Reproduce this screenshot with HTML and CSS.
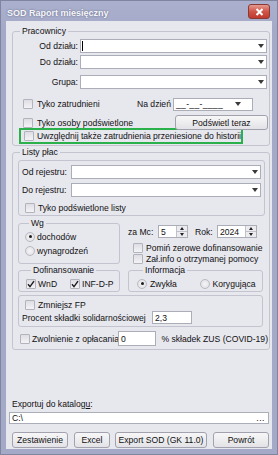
FILE: index.html
```html
<!DOCTYPE html>
<html lang="pl">
<head>
    <meta charset="UTF-8">
    <meta name="viewport" content="width=device-width, initial-scale=1.0">
    <title>SOD Raport miesięczny</title>
    <link rel="stylesheet" href="styles.css">
</head>
<body>

<div class="window">
    <div class="titlebar">
        <span class="title">SOD Raport miesięczny</span>
        <span class="close-btn">
            <svg width="9" height="8" viewBox="0 0 9 8"><path d="M1.5 1L7.5 7M7.5 1L1.5 7" stroke="#fff" stroke-width="2"/></svg>
        </span>
    </div>

    <div class="client">
        <!-- Pracownicy -->
        <fieldset class="group prac">
            <legend>Pracownicy</legend>
            <div class="row dzial-row">
                <span class="lbl-dzial">Od działu:</span>
                <div class="combo"><span class="cursor"></span><span class="arrow"></span></div>
            </div>
            <div class="row dzial-row mt2">
                <span class="lbl-dzial">Do działu:</span>
                <div class="combo"><span class="arrow"></span></div>
            </div>
            <div class="row dzial-row mt6">
                <span class="lbl-dzial">Grupa:</span>
                <div class="combo"><span class="arrow"></span></div>
            </div>
            <div class="row prac-chk1">
                <span class="chk-item zatr"><span class="check"></span>Tyko zatrudnieni</span>
                <span class="na-dzien">Na dzień</span>
                <div class="combo date"><span class="date-mask">__-__-____</span><span class="arrow"></span></div>
            </div>
            <div class="row prac-chk2">
                <span class="chk-item"><span class="check"></span>Tyko osoby podświetlone</span>
                <span class="btn podswietl">Podświetl teraz</span>
            </div>
            <div class="row highlight">
                <span class="chk-item"><span class="check"></span>Uwzględnij także zatrudnienia przeniesione do historii</span>
            </div>
        </fieldset>

        <!-- Listy płac -->
        <fieldset class="group listy">
            <legend>Listy płac</legend>
            <div class="box rejestr">
                <div class="row rej-row">
                    <span class="lbl-rej">Od rejestru:</span>
                    <div class="combo"><span class="arrow"></span></div>
                </div>
                <div class="row rej-row mt4">
                    <span class="lbl-rej">Do rejestru:</span>
                    <div class="combo"><span class="arrow"></span></div>
                </div>
                <div class="row rej-chk">
                    <span class="chk-item"><span class="check"></span>Tyko podświetlone listy</span>
                </div>
            </div>

            <div class="mid-row">
                <fieldset class="group wg">
                    <legend>Wg</legend>
                    <div class="row radio-row"><span class="radio on"></span>dochodów</div>
                    <div class="row radio-row mt3"><span class="radio"></span>wynagrodzeń</div>
                </fieldset>
                <div class="mid-right">
                    <div class="row spin-row">
                        <span class="lbl-mc">za Mc:</span>
                        <div class="spin mc">
                            <span class="spin-val">5</span>
                            <span class="spin-btns"><span class="up"></span><span class="down"></span></span>
                        </div>
                        <span class="lbl-rok">Rok:</span>
                        <div class="spin rok">
                            <span class="spin-val">2024</span>
                            <span class="spin-btns"><span class="up"></span><span class="down"></span></span>
                        </div>
                    </div>
                    <div class="row right-chk mt4"><span class="check"></span>Pomiń zerowe dofinansowanie</div>
                    <div class="row right-chk"><span class="check"></span>Zał.info o otrzymanej pomocy</div>
                </div>
            </div>

            <div class="dof-row">
                <fieldset class="group dof">
                    <legend>Dofinansowanie</legend>
                    <div class="row opt-row">
                        <span class="dof-item"><span class="check on"><svg width="8" height="8" viewBox="0 0 8 8"><path d="M1 4.2L3 6.6L7 1.2" fill="none" stroke="#1c1c1c" stroke-width="1.4"/></svg></span>WnD</span>
                        <span class="dof-item"><span class="check on"><svg width="8" height="8" viewBox="0 0 8 8"><path d="M1 4.2L3 6.6L7 1.2" fill="none" stroke="#1c1c1c" stroke-width="1.4"/></svg></span>INF-D-P</span>
                    </div>
                </fieldset>
                <fieldset class="group info">
                    <legend>Informacja</legend>
                    <div class="row opt-row">
                        <span class="info-item"><span class="radio on"></span>Zwykła</span>
                        <span class="info-item"><span class="radio"></span>Korygująca</span>
                    </div>
                </fieldset>
            </div>

            <div class="box fp">
                <div class="row fp-chk"><span class="check"></span>Zmniejsz FP</div>
                <div class="row fp-row">
                    <span class="lbl-proc">Procent składki solidarnościowej</span>
                    <span class="edit proc">2,3</span>
                </div>
            </div>

            <div class="row zwol-row">
                <span class="zwol-lbl"><span class="check"></span>Zwolnienie z opłacania</span>
                <span class="edit zwol">0</span>
                <span class="zus">% składek ZUS (COVID-19)</span>
            </div>
        </fieldset>

        <!-- Export -->
        <div class="export">
            <div class="export-lbl">Exportuj do katalog<u>u</u>:</div>
            <div class="edit path"><span>C:\</span><span class="dots">...</span></div>
            <div class="buttons">
                <span class="btn b-zest">Zestawienie</span>
                <span class="btn b-excel">Excel</span>
                <span class="btn b-sod">Export SOD (GK 11.0)</span>
                <span class="btn b-powrot">Powrót</span>
            </div>
        </div>
    </div>
</div>

</body>
</html>
```

FILE: styles.css
```css
* {
    box-sizing: border-box;
}
body {
    margin: 0;
    font-family: "Liberation Sans", Arial, sans-serif;
    font-size: 8.6px;
    color: #111;
    white-space: nowrap;
    background-color: #a5abc9;
}
.window {
    width: 278px;
    height: 455px;
    display: flex;
    flex-direction: column;
    background: linear-gradient(#aab0cd, #a3a9c7 30px, #a3a9c7);
    box-shadow: inset 0 0 0 1px #80859f;
}
.titlebar {
    height: 21px;
    display: flex;
    align-items: flex-start;
    justify-content: space-between;
    padding: 0 8px 0 7px;
}
.title {
    margin-top: 8px;
    line-height: 11px;
    font-size: 9px;
    font-weight: bold;
    color: #f6f6fa;
    text-shadow: 0 0 2px #5b607c;
}
.close-btn {
    margin-top: 4px;
    width: 22px;
    height: 15px;
    display: flex;
    align-items: center;
    justify-content: center;
    border: 1px solid #8a3a35;
    border-radius: 3px;
    background: linear-gradient(#e59a90, #cf5548 50%, #c0392f);
}
.client {
    flex: 1;
    margin: 0 6px 6px;
    padding: 5px 2px 1px 6px;
    display: flex;
    flex-direction: column;
    background-color: #e7e7ee;
}

/* group boxes */
.group {
    margin: 0;
    padding: 0;
    min-width: 0;
    border: 1px solid #c3c4cf;
    border-radius: 3px;
}
.group legend {
    padding: 0 2px;
    line-height: 11px;
    margin-left: 7px;
}
.box {
    border: 1px solid #c3c4cf;
    border-radius: 3px;
}
.row {
    display: flex;
    align-items: center;
}
.mt2 { margin-top: 2px; }
.mt3 { margin-top: 3px; }
.mt4 { margin-top: 4px; }
.mt6 { margin-top: 6px; }

/* controls */
.combo, .edit, .spin {
    height: 14px;
    background-color: #fff;
    border: 1px solid #abadb8;
    display: flex;
    align-items: center;
}
.combo {
    flex: 1;
    justify-content: space-between;
    padding-right: 2px;
}
.arrow {
    margin-left: auto;
    width: 0;
    height: 0;
    border-left: 3.5px solid transparent;
    border-right: 3.5px solid transparent;
    border-top: 4px solid #3a3a3a;
}
.cursor {
    width: 1px;
    height: 10px;
    margin-left: 1px;
    background-color: #000;
}
.check {
    width: 10px;
    height: 10px;
    flex: none;
    border: 1px solid #b2b3bd;
    border-radius: 1px;
    background: linear-gradient(#dddde3, #f4f4f7);
    display: flex;
    align-items: center;
    justify-content: center;
}
.radio {
    width: 10px;
    height: 10px;
    flex: none;
    border: 1px solid #b8b9c2;
    border-radius: 50%;
    background: radial-gradient(#f6f6f8, #dcdce2);
    display: flex;
    align-items: center;
    justify-content: center;
}
.radio.on::after {
    content: "";
    width: 3px;
    height: 3px;
    border-radius: 50%;
    background-color: #1c1c1c;
}
.chk-item {
    display: flex;
    align-items: center;
    gap: 4px;
}
.btn {
    height: 16px;
    display: flex;
    align-items: center;
    justify-content: center;
    border: 1px solid #a1a2ae;
    border-radius: 3px;
    background: linear-gradient(#f7f7f8, #e3e3e7);
}

/* Pracownicy */
.prac {
    padding: 2px 0 1px 0;
}
.dzial-row {
    height: 14px;
    padding-right: 2px;
}
.lbl-dzial {
    width: 65px;
    text-align: right;
    margin-right: 2px;
}
.prac-chk1 {
    margin-top: 8px;
    height: 14px;
    padding-left: 10px;
}
.zatr {
    width: 114px;
}
.na-dzien {
    width: 36px;
}
.date {
    flex: none;
    width: 80px;
    height: 13px;
    padding-left: 2px;
    padding-right: 11px;
}
.date-mask {
    letter-spacing: 0.3px;
}
.prac-chk2 {
    margin-top: 4px;
    height: 15px;
    padding-left: 10px;
    padding-right: 1px;
}
.podswietl {
    margin-left: auto;
    width: 93px;
    height: 15px;
}
.highlight {
    margin: -2px 0 0 6px;
    width: 224px;
    height: 16px;
    padding-left: 3px;
    border: 2px solid #2bb14b;
}
.highlight .chk-item {
    gap: 3px;
}

/* Listy plac */
.listy {
    margin-top: 1px;
    padding: 0 1px 3px 0;
}
.rejestr {
    margin: 2px 3px 0 5px;
    padding: 4px 3px 2px 3px;
}
.rej-row {
    height: 14px;
}
.lbl-rej {
    width: 49px;
}
.rej-chk {
    margin-top: 5px;
    height: 11px;
    padding-left: 3px;
}
.rej-chk .chk-item {
    gap: 3px;
}
.mid-row {
    display: flex;
    margin: 2px 0 0 5px;
}
.wg {
    width: 102px;
    padding: 2px 0 3px 6px;
}
.wg legend {
    margin-left: 4px;
}
.radio-row {
    height: 11px;
    gap: 2px;
}
.mid-right {
    margin-left: 8px;
}
.spin-row {
    margin-top: 7px;
    height: 13px;
}
.lbl-mc {
    width: 30px;
}
.lbl-rok {
    width: 22px;
    margin-left: 7px;
}
.spin {
    height: 13px;
}
.spin.mc {
    width: 30px;
}
.spin.rok {
    width: 40px;
}
.spin-val {
    flex: 1;
    padding-left: 2px;
}
.spin-btns {
    width: 11px;
    height: 100%;
    display: flex;
    flex-direction: column;
    border-left: 1px solid #c0c1ca;
    background-color: #ececf0;
}
.spin-btns span {
    flex: 1;
    display: flex;
    align-items: center;
    justify-content: center;
}
.spin-btns .up {
    border-bottom: 1px solid #c0c1ca;
}
.spin-btns .up::after {
    content: "";
    border-left: 2.5px solid transparent;
    border-right: 2.5px solid transparent;
    border-bottom: 3px solid #222;
}
.spin-btns .down::after {
    content: "";
    border-left: 2.5px solid transparent;
    border-right: 2.5px solid transparent;
    border-top: 3px solid #222;
}
.right-chk {
    height: 11px;
    padding-left: 5px;
    gap: 3px;
}
.dof-row {
    display: flex;
    margin: 1px 0 0 5px;
}
.dof {
    width: 102px;
    padding: 2px 0 2px 7px;
}
.dof legend {
    margin-left: 5px;
}
.opt-row {
    height: 11px;
}
.dof-item {
    width: 44px;
    display: flex;
    align-items: center;
    gap: 2px;
}
.info {
    width: 135px;
    margin-left: 8px;
    padding: 2px 0 2px 8px;
}
.info legend {
    margin-left: 6px;
}
.info-item {
    width: 63px;
    display: flex;
    align-items: center;
    gap: 3px;
}
.fp {
    margin: 3px 0 0 5px;
    width: 245px;
    padding: 3px 0 2px 0;
}
.fp-chk {
    height: 11px;
    padding-left: 6px;
    gap: 3px;
}
.fp-row {
    margin-top: 1px;
    height: 13px;
    padding-left: 3px;
}
.lbl-proc {
    width: 130px;
}
.edit {
    padding-left: 2px;
}
.edit.proc {
    width: 40px;
    height: 13px;
}
.zwol-row {
    margin-top: 4px;
    height: 15px;
}
.zwol-lbl {
    width: 105px;
    padding-left: 7px;
    display: flex;
    align-items: center;
    gap: 2px;
}
.edit.zwol {
    width: 39px;
    height: 15px;
}
.zus {
    margin-left: 6px;
}

/* Export */
.export {
    margin-top: auto;
}
.export-lbl {
    line-height: 10px;
}
.edit.path {
    margin: 3px 1px 0 -3px;
    height: 12px;
    justify-content: space-between;
    padding-right: 3px;
}
.dots {
    letter-spacing: 0.5px;
}
.buttons {
    display: flex;
    margin-top: 8px;
    padding-right: 1px;
}
.b-zest { width: 56px; }
.b-excel { width: 36px; margin-left: 6px; }
.b-sod { width: 92px; margin-left: 5px; }
.b-powrot { width: 56px; margin-left: 6px; }
```
